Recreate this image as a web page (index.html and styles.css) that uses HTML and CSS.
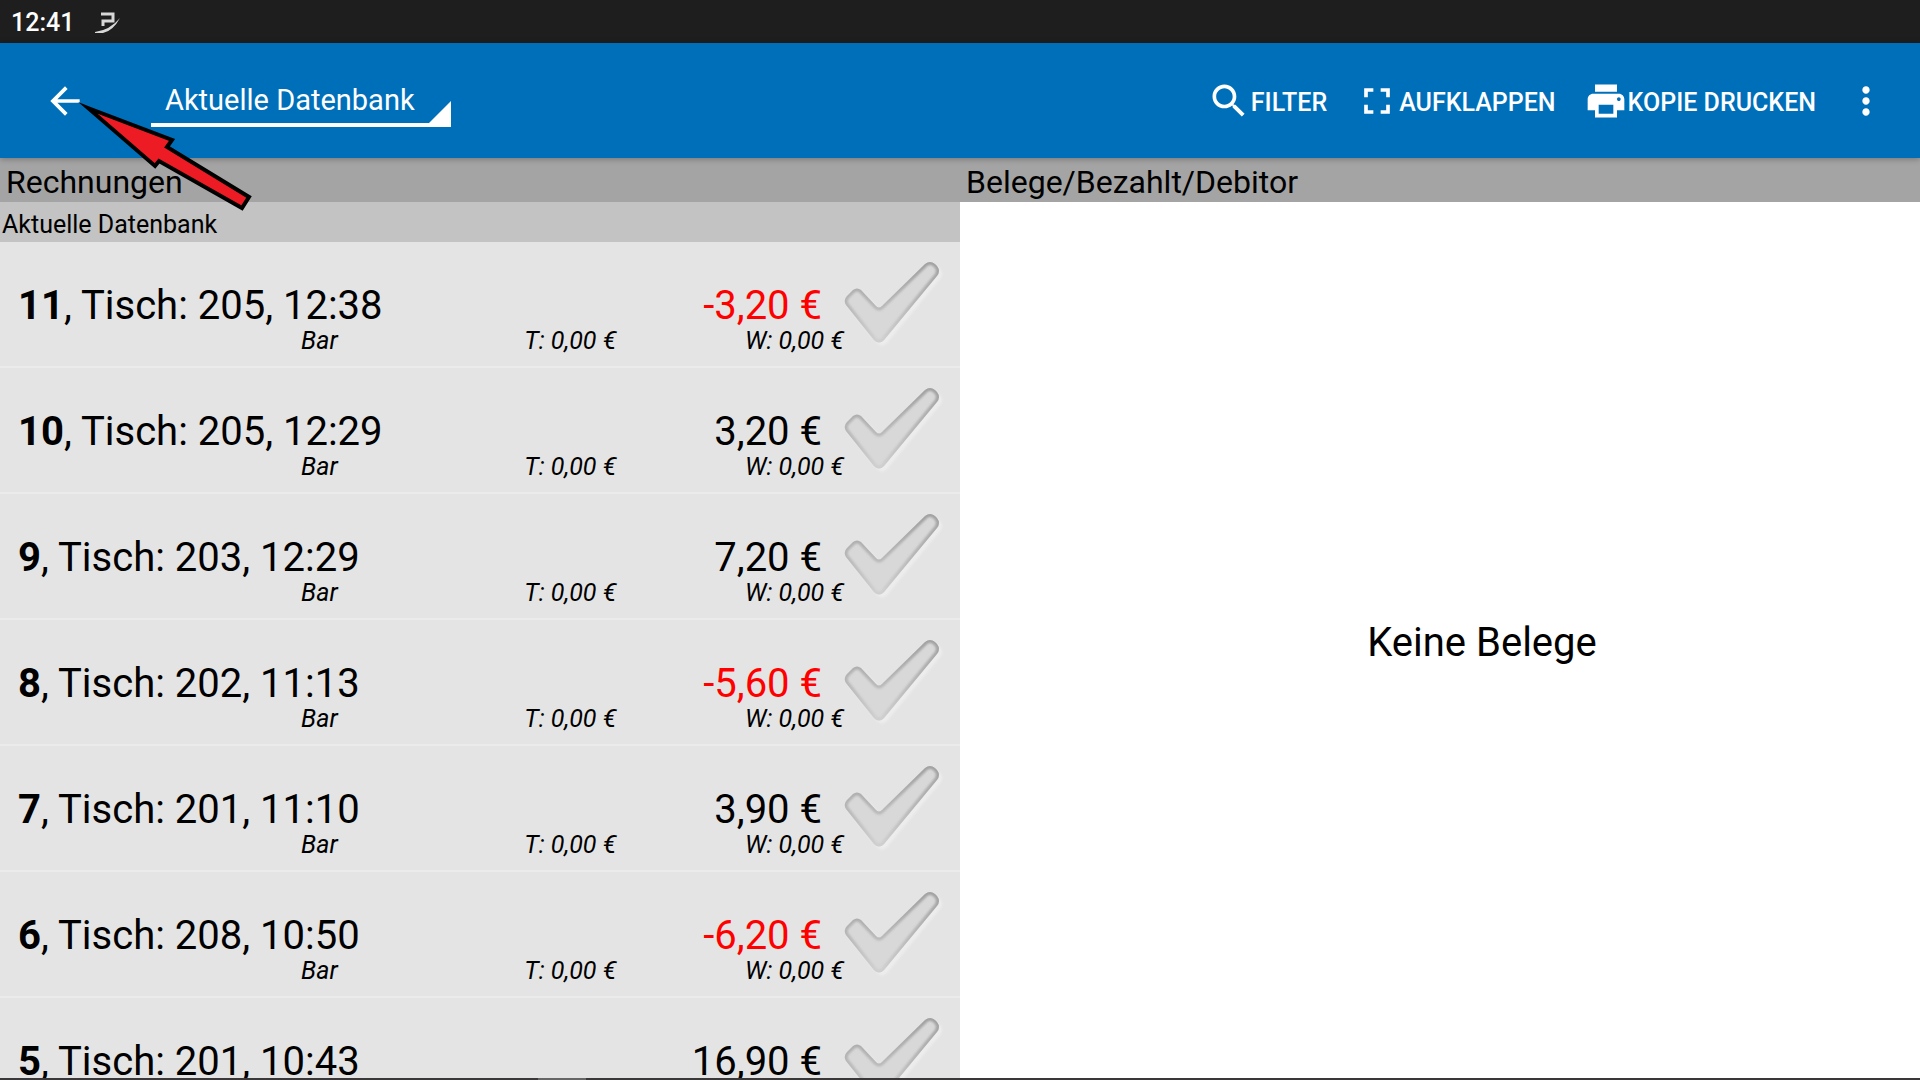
FILE: index.html
```
<!DOCTYPE html>
<html lang="de">
<head>
  <meta charset="utf-8">
  <title>Rechnungen</title>
  <link rel="stylesheet" href="styles.css">
</head>
<body>
  <svg class="defs" width="0" height="0" aria-hidden="true">
    <defs>
      <linearGradient id="check-edge" x1="0" y1="0" x2="0" y2="1">
        <stop offset="0" stop-color="#a0a0a0"/>
        <stop offset="0.55" stop-color="#b8b8b8"/>
        <stop offset="1" stop-color="#d0d0d0"/>
      </linearGradient>
      <filter id="check-soft" x="-10%" y="-10%" width="120%" height="120%">
        <feGaussianBlur stdDeviation="1"/>
      </filter>
      <path id="check-shape" d="M5 35 L11 29 Q15 26 19 29 L34 45 Q37 48 40 45 L83 3 Q88 -1 93 3 L95 5 Q99 10 95 15 L42 79 Q37 84 32 79 L4 44 Q1 39 5 35 Z"/>
      <clipPath id="check-clip"><use href="#check-shape"/></clipPath>
      <symbol id="check" viewBox="2 -3 96 93" overflow="visible">
        <use href="#check-shape" x="3" y="3" fill="#ededed" filter="url(#check-soft)"/>
        <use href="#check-shape" fill="#d8d8d8"/>
        <g clip-path="url(#check-clip)">
          <use href="#check-shape" fill="none" stroke="url(#check-edge)" stroke-width="6" filter="url(#check-soft)"/>
        </g>
      </symbol>
    </defs>
  </svg>

  <div class="status-bar">
    <span class="clock">12:41</span>
    <svg class="status-logo" viewBox="0 0 26 22" aria-hidden="true">
      <path d="M6 2 H18 V9 H8 V14" fill="none" stroke="#d8d8d8" stroke-width="3"/>
      <path d="M0 20 Q15 18 25 6 Q18 19 8 21 H0 Z" fill="#d8d8d8"/>
    </svg>
  </div>

  <header class="toolbar">
    <button class="icon-button" type="button" aria-label="Zurück">
      <svg class="icon" viewBox="0 0 24 24"><path d="M20 11H7.83l5.59-5.59L12 4l-8 8 8 8 1.41-1.41L7.83 13H20v-2z"/></svg>
    </button>
    <div class="spinner">
      <select aria-label="Datenbank">
        <option>Aktuelle Datenbank</option>
      </select>
    </div>
    <div class="actions">
      <button class="action" type="button">
        <svg class="icon" viewBox="0 0 24 24"><path d="M15.5 14h-.79l-.28-.27C15.41 12.59 16 11.11 16 9.5 16 5.91 13.09 3 9.5 3S3 5.91 3 9.5 5.91 16 9.5 16c1.61 0 3.09-.59 4.23-1.57l.27.28v.79l5 4.99L20.49 19l-4.99-5zm-6 0C7.01 14 5 11.99 5 9.5S7.01 5 9.5 5 14 7.01 14 9.5 11.99 14 9.5 14z"/></svg>
        <span>FILTER</span>
      </button>
      <button class="action" type="button">
        <svg class="icon" viewBox="0 0 24 24"><path d="M7 14H5v5h5v-2H7v-3zm-2-4h2V7h3V5H5v5zm12 7h-3v2h5v-5h-2v3zM14 5v2h3v3h2V5h-5z"/></svg>
        <span>AUFKLAPPEN</span>
      </button>
      <button class="action" type="button">
        <svg class="icon" viewBox="0 0 24 24"><path d="M19 8H5c-1.66 0-3 1.34-3 3v6h4v4h12v-4h4v-6c0-1.66-1.34-3-3-3zm-3 11H8v-5h8v5zm3-7c-.55 0-1-.45-1-1s.45-1 1-1 1 .45 1 1-.45 1-1 1zm-1-9H6v4h12V3z"/></svg>
        <span>KOPIE DRUCKEN</span>
      </button>
      <button class="icon-button" type="button" aria-label="Mehr">
        <svg class="icon" viewBox="0 0 24 24"><path d="M12 8c1.100 0 2-.9 2-2s-.9-2-2-2-2 .9-2 2 .9 2 2 2zm0 2c-1.100 0-2 .9-2 2s.9 2 2 2 2-.9 2-2-.9-2-2-2zm0 6c-1.100 0-2 .9-2 2s.9 2 2 2 2-.9 2-2-.9-2-2-2z"/></svg>
      </button>
    </div>
  </header>

  <main class="panes">
    <section class="pane">
      <h1 class="pane-title">Rechnungen</h1>
      <h2 class="group-title">Aktuelle Datenbank</h2>
      <ul class="bills">
        <li class="bill">
          <div class="bill-info">
            <div class="bill-main"><span><b>11</b>, Tisch: 205, 12:38</span><span class="amount negative">-3,20 €</span></div>
            <div class="bill-sub"><span>Bar</span><span>T: 0,00 €</span><span>W: 0,00 €</span></div>
          </div>
          <label class="check"><input type="checkbox" aria-label="Rechnung 11"><svg><use href="#check"/></svg></label>
        </li>
        <li class="bill">
          <div class="bill-info">
            <div class="bill-main"><span><b>10</b>, Tisch: 205, 12:29</span><span class="amount">3,20 €</span></div>
            <div class="bill-sub"><span>Bar</span><span>T: 0,00 €</span><span>W: 0,00 €</span></div>
          </div>
          <label class="check"><input type="checkbox" aria-label="Rechnung 10"><svg><use href="#check"/></svg></label>
        </li>
        <li class="bill">
          <div class="bill-info">
            <div class="bill-main"><span><b>9</b>, Tisch: 203, 12:29</span><span class="amount">7,20 €</span></div>
            <div class="bill-sub"><span>Bar</span><span>T: 0,00 €</span><span>W: 0,00 €</span></div>
          </div>
          <label class="check"><input type="checkbox" aria-label="Rechnung 9"><svg><use href="#check"/></svg></label>
        </li>
        <li class="bill">
          <div class="bill-info">
            <div class="bill-main"><span><b>8</b>, Tisch: 202, 11:13</span><span class="amount negative">-5,60 €</span></div>
            <div class="bill-sub"><span>Bar</span><span>T: 0,00 €</span><span>W: 0,00 €</span></div>
          </div>
          <label class="check"><input type="checkbox" aria-label="Rechnung 8"><svg><use href="#check"/></svg></label>
        </li>
        <li class="bill">
          <div class="bill-info">
            <div class="bill-main"><span><b>7</b>, Tisch: 201, 11:10</span><span class="amount">3,90 €</span></div>
            <div class="bill-sub"><span>Bar</span><span>T: 0,00 €</span><span>W: 0,00 €</span></div>
          </div>
          <label class="check"><input type="checkbox" aria-label="Rechnung 7"><svg><use href="#check"/></svg></label>
        </li>
        <li class="bill">
          <div class="bill-info">
            <div class="bill-main"><span><b>6</b>, Tisch: 208, 10:50</span><span class="amount negative">-6,20 €</span></div>
            <div class="bill-sub"><span>Bar</span><span>T: 0,00 €</span><span>W: 0,00 €</span></div>
          </div>
          <label class="check"><input type="checkbox" aria-label="Rechnung 6"><svg><use href="#check"/></svg></label>
        </li>
        <li class="bill">
          <div class="bill-info">
            <div class="bill-main"><span><b>5</b>, Tisch: 201, 10:43</span><span class="amount">16,90 €</span></div>
          </div>
          <label class="check"><input type="checkbox" aria-label="Rechnung 5"><svg><use href="#check"/></svg></label>
        </li>
      </ul>
    </section>
    <section class="pane receipts">
      <h1 class="pane-title">Belege/Bezahlt/Debitor</h1>
      <p class="empty">Keine Belege</p>
    </section>
  </main>

  <footer class="nav-edge"><span class="nav-handle"></span></footer>

  <svg class="pointer" viewBox="0 0 176 112" aria-hidden="true">
    <polygon points="8,7 92,39 87,46 169,96 162,107 79,60 75,65"/>
  </svg>
</body>
</html>
```
FILE: styles.css
```
* {
  box-sizing: border-box;
}

body {
  margin: 0;
  height: 100vh;
  display: flex;
  flex-direction: column;
  overflow: hidden;
  background-color: #fff;
  color: #000;
  font-family: Roboto, sans-serif;
}

h1, h2, p, ul {
  margin: 0;
  padding: 0;
  font-weight: 400;
}

button, select {
  padding: 0;
  border: none;
  background: none;
  color: #fff;
  font-family: inherit;
}

.defs {
  position: absolute;
}

/* status bar */
.status-bar {
  flex: none;
  display: flex;
  align-items: center;
  gap: 21px;
  height: 43px;
  padding: 2px 0 0 11px;
  background-color: #1e1e1e;
}

.clock {
  color: #fff;
  font-size: 25px;
  font-weight: 500;
}

.status-logo {
  width: 26px;
  height: 22px;
}

/* toolbar */
.toolbar {
  flex: none;
  display: flex;
  align-items: center;
  height: 115px;
  padding: 0 32px 0 43px;
  background-color: #006fba;
  box-shadow: 0 1px 6px rgba(0, 0, 0, 0.3);
  z-index: 1;
}

.icon {
  display: block;
  width: 44px;
  height: 44px;
  fill: #fff;
}

.spinner {
  position: relative;
  width: 300px;
  margin-left: 64px;
  border-bottom: 4px solid #fff;
}

.spinner select {
  display: block;
  width: 100%;
  height: 49px;
  padding: 2px 0 0 14px;
  appearance: none;
  font-size: 29px;
}

.spinner::after {
  content: "";
  position: absolute;
  right: 0;
  bottom: -4px;
  width: 26px;
  height: 26px;
  background-color: #fff;
  clip-path: polygon(100% 0, 100% 100%, 0 100%);
  pointer-events: none;
}

.actions {
  display: flex;
  align-items: center;
  gap: 28px;
  margin-left: auto;
}

.action {
  display: flex;
  align-items: center;
  font-size: 25px;
  font-weight: 500;
}

.action span {
  padding-top: 3px;
}

/* panes */
.panes {
  flex: 1;
  min-height: 0;
  display: grid;
  grid-template-columns: 1fr 1fr;
}

.pane {
  min-height: 0;
  overflow: hidden;
}

.pane-title {
  height: 44px;
  padding-left: 6px;
  background-color: #a4a4a4;
  font-size: 32px;
  line-height: 48px;
}

.group-title {
  height: 40px;
  padding-left: 2px;
  background-color: #c3c3c3;
  font-size: 25px;
  line-height: 46px;
}

.bills {
  list-style: none;
}

.bill {
  display: flex;
  justify-content: space-between;
  height: 126px;
  padding: 16px 20px 0 18px;
  border-bottom: 2px solid #ebebeb;
  background-color: #e4e4e4;
}

.bill-info {
  flex: 1;
  padding-top: 26px;
}

.bill-main {
  display: flex;
  justify-content: space-between;
  padding-right: 22px;
  font-size: 40px;
  line-height: 44px;
}

.bill-sub {
  display: grid;
  grid-template-columns: 320fr 279fr 228fr;
  font-size: 25px;
  font-style: italic;
  line-height: 26px;
  text-align: right;
}

.negative {
  color: #f00;
}

.check {
  flex: none;
  width: 96px;
  height: 93px;
}

.check input {
  position: absolute;
  opacity: 0;
}

.check svg {
  display: block;
  width: 100%;
  height: 100%;
  overflow: visible;
}

.receipts {
  display: flex;
  flex-direction: column;
}

.empty {
  flex: 1;
  display: flex;
  align-items: center;
  justify-content: center;
  padding: 4px 0 0 84px;
  font-size: 40px;
}

/* visible top edge of the navigation bar */
.nav-edge {
  flex: none;
  display: flex;
  height: 2px;
  padding-left: 28%;
  background-color: #3a3839;
}

.nav-handle {
  width: 48px;
  background-color: #666;
}

/* arrow pointing at the back button */
.pointer {
  position: absolute;
  left: 80px;
  top: 101px;
  width: 176px;
  height: 112px;
  overflow: visible;
  fill: #ed1c24;
  stroke: #000;
  stroke-width: 4;
  stroke-miterlimit: 10;
  pointer-events: none;
  z-index: 2;
}
```
